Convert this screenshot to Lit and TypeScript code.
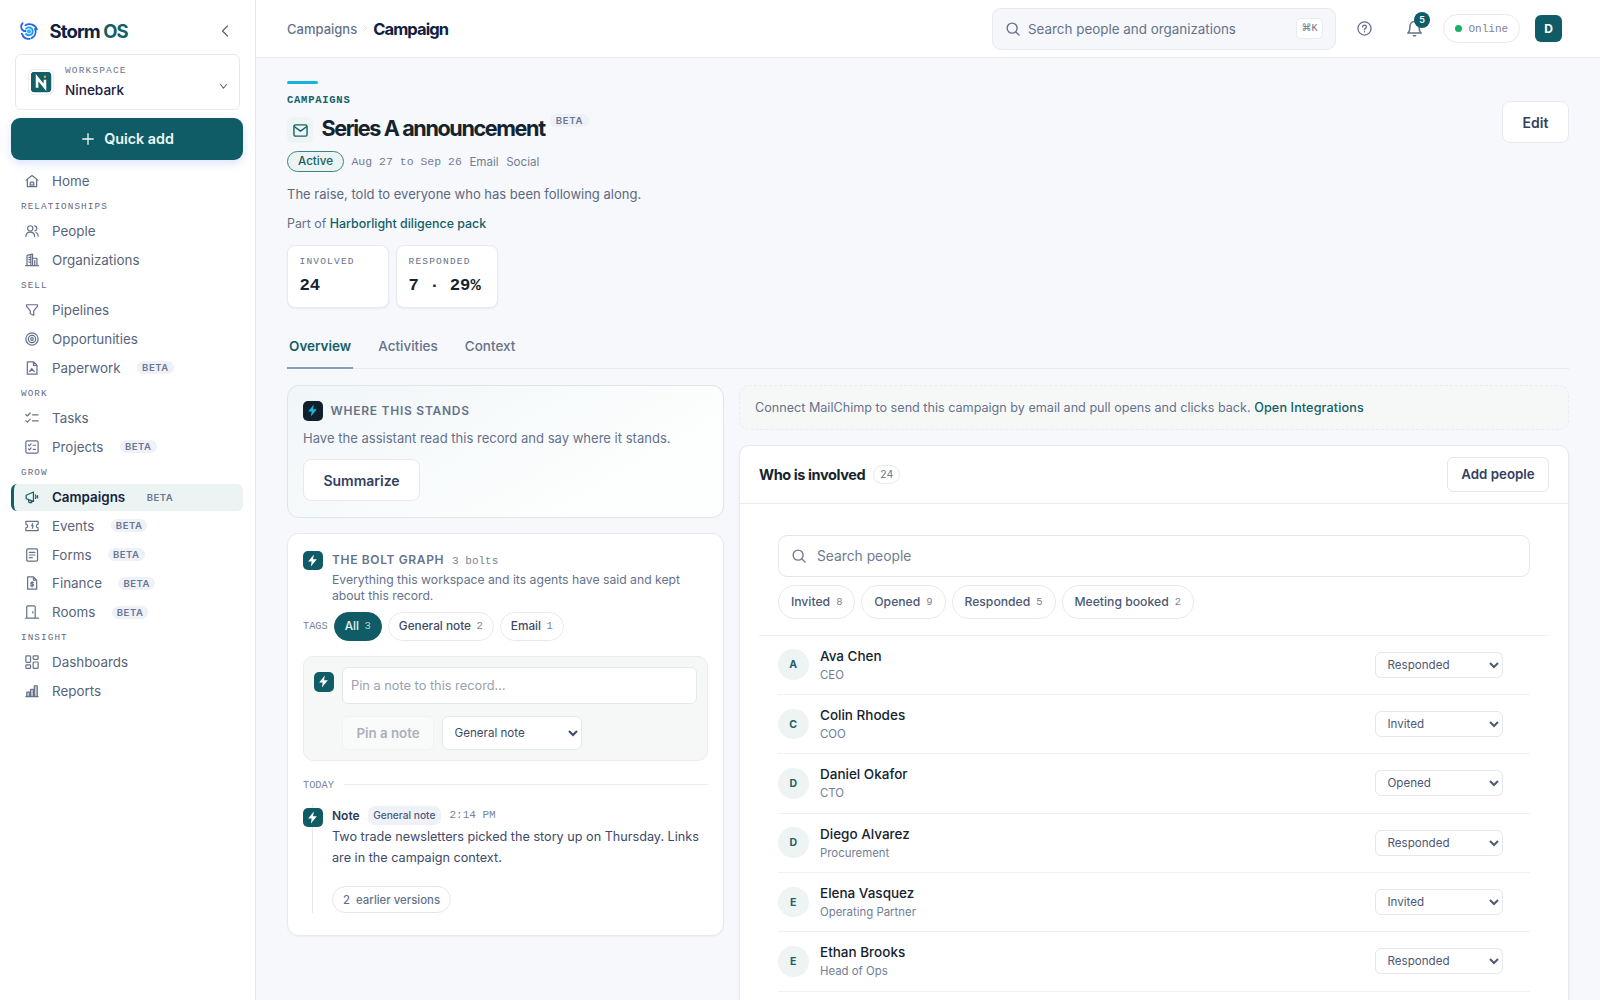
import { LitElement, html, css, svg, nothing } from 'lit';
import { customElement, property } from 'lit/decorators.js';
import { classMap } from 'lit/directives/class-map.js';

interface NavItem {
  label: string;
  icon: string;
  beta?: boolean;
  active?: boolean;
}

interface NavGroup {
  title?: string;
  items: NavItem[];
}

interface Person {
  name: string;
  role: string;
  status: string;
}

const NAV: NavGroup[] = [
  { items: [{ label: 'Home', icon: 'home' }] },
  {
    title: 'Relationships',
    items: [
      { label: 'People', icon: 'people' },
      { label: 'Organizations', icon: 'building' },
    ],
  },
  {
    title: 'Sell',
    items: [
      { label: 'Pipelines', icon: 'funnel' },
      { label: 'Opportunities', icon: 'target' },
      { label: 'Paperwork', icon: 'paper', beta: true },
    ],
  },
  {
    title: 'Work',
    items: [
      { label: 'Tasks', icon: 'tasks' },
      { label: 'Projects', icon: 'projects', beta: true },
    ],
  },
  {
    title: 'Grow',
    items: [
      { label: 'Campaigns', icon: 'megaphone', beta: true, active: true },
      { label: 'Events', icon: 'ticket', beta: true },
      { label: 'Forms', icon: 'form', beta: true },
      { label: 'Finance', icon: 'finance', beta: true },
      { label: 'Rooms', icon: 'door', beta: true },
    ],
  },
  {
    title: 'Insight',
    items: [
      { label: 'Dashboards', icon: 'dashboard' },
      { label: 'Reports', icon: 'chart' },
    ],
  },
];

const PEOPLE: Person[] = [
  { name: 'Ava Chen', role: 'CEO', status: 'Responded' },
  { name: 'Colin Rhodes', role: 'COO', status: 'Invited' },
  { name: 'Daniel Okafor', role: 'CTO', status: 'Opened' },
  { name: 'Diego Alvarez', role: 'Procurement', status: 'Responded' },
  { name: 'Elena Vasquez', role: 'Operating Partner', status: 'Invited' },
  { name: 'Ethan Brooks', role: 'Head of Ops', status: 'Responded' },
];

const STATUSES = ['Invited', 'Opened', 'Responded', 'Meeting booked'];

const FILTERS = [
  { label: 'Invited', count: 8 },
  { label: 'Opened', count: 9 },
  { label: 'Responded', count: 5 },
  { label: 'Meeting booked', count: 2 },
];

const TAGS = [
  { label: 'All', count: 3, active: true },
  { label: 'General note', count: 2, active: false },
  { label: 'Email', count: 1, active: false },
];

// 24x24 outlines, stroked with currentColor
const ICONS: Record<string, unknown> = {
  home: svg`<path d="M2 10.5 12 2.5l10 8M4 9.5v12h16v-12M9 21.5v-6q0-1.5 1.5-1.5h3q1.5 0 1.5 1.5v6M12 17.5v4"/>`,
  people: svg`<circle cx="9" cy="7.5" r="4.5"/><path d="M1.5 21.5c0-5 3-7.5 7.5-7.5s7.5 2.5 7.5 7.5M16.5 3.2c2.5.3 3.8 2 3.8 4.3s-1.3 3.7-3.3 4.2M19 14.5c2.5 1.2 3.7 3.5 3.7 6.5"/>`,
  building: svg`<path d="M1 21.5h22M3.5 21.5V4l9.5-2v19.5M13 9h7.5v12.5M6.8 7.5h2.5M6.8 11.5h2.5M6.8 15.5h2.5M10 2.5v19M16.8 13v8.5"/>`,
  funnel: svg`<path d="M2.5 3h19v2.5l-6.5 8V21l-6-2.5v-5l-6.5-8z"/>`,
  target: svg`<circle cx="12" cy="12" r="10.5"/><circle cx="12" cy="12" r="6.3"/><circle cx="12" cy="12" r="2.2"/>`,
  paper: svg`<path d="M4 1.5h11l5.5 5.5v15.5H4zM14.5 1.5v6h6M8 18c1.5-1 3-3.5 3.5-5.5.7 2 1.5 4.500 4.500 5.500M8.500 16h6"/>`,
  tasks: svg`<path d="M1.5 6 4 8.5l5-5M1.5 16.5 4 19l5-5M13 6.5h9.5M13 17h9.5"/>`,
  projects: svg`<rect x="1.5" y="1.5" width="21" height="21" rx="2.5"/><path d="M6 8.5 7.5 10l3-3.5M6 15.5 7.5 17l3-3.5M14 9h4M14 16h4"/>`,
  megaphone: svg`<path d="M2 9 14.5 3.5v16L2 15zM5.5 15.5l1.5 6h4.5l-1.5-4M18 8.5q1.5 3 0 6M21.5 9.5v4"/>`,
  ticket: svg`<path d="M1.5 4h21v5a3 3 0 0 0 0 6v5h-21v-5a3 3 0 0 0 0-6zM13 8l-1.5 3.5H14L12.5 16"/>`,
  form: svg`<rect x="3" y="1.5" width="18.5" height="21" rx="2"/><path d="M7.5 7.5H17M7.5 12H17M7.5 16.5h5"/>`,
  finance: svg`<path d="M4.5 1.5h10L20 7v15.5H4.5zM14.5 1.5V7h5M14.5 11.5c-1-1-4.5-1-4.5.8 0 2.2 4.5 1 4.5 3.2 0 1.9-3.5 1.9-4.7.7M12.2 9.5v9"/>`,
  door: svg`<path d="M1 22.5h22.5M3 22.5v-19q0-2 2-2h10.5q2 0 2 2v19M13.5 11.5v2"/>`,
  dashboard: svg`<rect x="1.5" y="1.5" width="8" height="11" rx="1.5"/><rect x="14" y="1.5" width="8.5" height="6" rx="1.5"/><rect x="1.5" y="17" width="8" height="6" rx="1.5"/><rect x="14" y="12" width="8.5" height="11" rx="1.5"/>`,
  chart: svg`<path fill="currentColor" fill-opacity=".35" d="M3 21v-7h5v7zM9.5 21V9h5v12zM16 21V3h5v18z"/><path d="M1.5 21.5h21"/>`,
  search: svg`<circle cx="10.5" cy="10.5" r="8.5"/><path d="M17 17l5.5 5.5"/>`,
  help: svg`<circle cx="12" cy="12" r="10.5"/><path d="M9 9.5c0-4 6-4 6 0 0 2.5-3 2-3 4.5M12 17v.5"/>`,
  bell: svg`<path d="M2.5 18.5c2.5-2 3-4 3-9C5.5 5 8 2 12 2s6.5 3 6.5 7.5c0 5 .5 7 3 9zM10.5 22q1.5 1 3 0"/>`,
  mail: svg`<rect x="1.5" y="3" width="21" height="18" rx="2.5"/><path d="M2.5 6l9.5 7 9.5-7"/>`,
  plus: svg`<path d="M12 1.5v21M1.5 12h21"/>`,
  left: svg`<path d="M17 2 7 12l10 10"/>`,
  down: svg`<path d="M2 5l10 13 10-13"/>`,
  right: svg`<path d="M7 3l9 9-9 9"/>`,
};

@customElement('storm-icon')
export class StormIcon extends LitElement {
  static styles = css`
    :host {
      display: inline-flex;
      flex: none;
    }

    svg {
      display: block;
      fill: none;
      stroke: currentColor;
      stroke-linecap: round;
      stroke-linejoin: round;
    }
  `;

  @property({ type: String })
  name = '';

  @property({ type: Number })
  size = 15;

  @property({ type: Number })
  weight = 2.1;

  render() {
    return html`
      <svg
        width=${this.size}
        height=${this.size}
        viewBox="0 0 24 24"
        stroke-width=${this.weight}
      >
        ${ICONS[this.name] ?? nothing}
      </svg>
    `;
  }
}

@customElement('storm-bolt')
export class StormBolt extends LitElement {
  static styles = css`
    :host {
      display: flex;
      flex: none;
      align-items: center;
      justify-content: center;
      width: 19.5px;
      height: 19.5px;
      border-radius: 5px;
      background: #105c66;
      color: #fff;
    }

    :host([dark]) {
      background: #10202c;
      color: #14b8e0;
    }
  `;

  @property({ type: Boolean, reflect: true })
  dark = false;

  render() {
    return html`
      <svg width="13" height="13" viewBox="0 0 24 24" fill="currentColor">
        <path d="M14.5 1 4 14h6.5L9 23 20 9.500h-7z"></path>
      </svg>
    `;
  }
}

@customElement('storm-sidebar')
export class StormSidebar extends LitElement {
  static styles = css`
    :host {
      display: block;
      box-sizing: border-box;
      width: 256px;
      height: 1000px;
      padding: 17px 12px 0 11px;
      border-right: 1px solid #e6eaf0;
      background: #fff;
      color: #58647c;
    }

    .brand {
      display: flex;
      align-items: center;
      height: 28px;
      padding: 0 12px 0 8.5px;
    }

    .wordmark {
      flex: 1;
      margin-left: 12px;
      font-size: 18.5px;
      font-weight: 700;
      letter-spacing: -0.88px;
      color: #10203f;
    }

    .wordmark span {
      color: #135f66;
    }

    .workspace {
      display: flex;
      align-items: center;
      box-sizing: border-box;
      height: 56px;
      margin: 9px 3px 8px 4px;
      padding: 0 12px;
      border: 1px solid #e6eaee;
      border-radius: 6px;
    }

    .workspace-logo {
      box-sizing: border-box;
      width: 26px;
      height: 26px;
      padding: 1.5px;
      border: 1px solid #e9eef3;
      border-radius: 6px;
    }

    .workspace-text {
      flex: 1;
      margin-left: 11px;
    }

    .eyebrow {
      font-family: 'Liberation Mono', monospace;
      font-size: 9.5px;
      line-height: 14px;
      letter-spacing: 1.15px;
      text-transform: uppercase;
      color: #6b7690;
    }

    .workspace-name {
      margin-top: 2px;
      font-size: 13.6px;
      line-height: 20px;
      font-weight: 500;
      color: #17223f;
    }

    .workspace storm-icon {
      margin: 9px 0.5px 0 0;
    }

    .quick-add {
      display: flex;
      align-items: center;
      justify-content: center;
      gap: 10px;
      width: 100%;
      height: 42px;
      margin-bottom: 7.5px;
      padding: 0 0 1px 2px;
      border: 0;
      border-radius: 9px;
      background: #105c66;
      box-shadow: 0 3px 10px rgba(60, 110, 240, 0.2);
      color: #eaf7f8;
      font: 600 14.3px Inter, sans-serif;
    }

    .item {
      display: flex;
      align-items: center;
      box-sizing: border-box;
      height: 27px;
      margin-bottom: 1.75px;
      padding-left: 14px;
      font-size: 13.4px;
    }

    .item storm-icon {
      width: 15px;
      margin-right: 12px;
      color: #66728a;
    }

    .item.active {
      padding-left: 11px;
      border-left: 3px solid #135f66;
      border-radius: 6px;
      background: #ebf3f3;
      font-weight: 600;
      color: #17223f;
    }

    .item.active storm-icon {
      color: #135f66;
    }

    .title {
      height: 21.5px;
      padding-left: 10px;
      font-family: 'Liberation Mono', monospace;
      font-size: 9.3px;
      line-height: 22px;
      letter-spacing: 1.1px;
      text-transform: uppercase;
      color: #5f6c84;
    }

    .beta {
      height: 13px;
      margin-left: 16.5px;
      padding: 0 5px;
      border-radius: 7px;
      background: #eef1f8;
      font-size: 9.6px;
      line-height: 13.5px;
      font-weight: 600;
      letter-spacing: 0.5px;
      color: #6b7690;
    }

    .active .beta {
      background: transparent;
    }
  `;

  render() {
    return html`
      <div class="brand">
        <svg
          width="18"
          height="18"
          viewBox="0 0 24 24"
          fill="none"
          stroke="#2563eb"
          stroke-width="2.4"
          stroke-linecap="round"
        >
          <path d="M3.5 1.5C.5 5 1 9.500 4.500 11.500c1 .6 2 .7 3 .5"></path>
          <path d="M7 4.500C13 .5 21 4 22.500 10"></path>
          <path d="M20 9c2 5 0 10-4.500 12.500"></path>
          <path d="M2.500 15.500C4 20 8 23 13 22.500"></path>
          <path
            stroke="#1d9bf0"
            d="M8 9c3-3.500 9-1.500 9 3.500 0 4.500-5.500 7-9 3.500"
          ></path>
          <circle cx="12" cy="12.500" r="1.500" stroke="#22b8f0"></circle>
        </svg>
        <div class="wordmark">Storm <span>OS</span></div>
        <storm-icon name="left" size="12" weight="2.4"></storm-icon>
      </div>

      <div class="workspace">
        <svg class="workspace-logo" viewBox="0 0 24 24">
          <rect width="24" height="24" rx="5" fill="#135f66"></rect>
          <path
            d="M7.5 18.5V7l9 11V9.5"
            fill="none"
            stroke="#fff"
            stroke-width="3"
          ></path>
          <circle cx="16.5" cy="6" r="1.4" fill="#e8a33d"></circle>
        </svg>
        <div class="workspace-text">
          <div class="eyebrow">Workspace</div>
          <div class="workspace-name">Ninebark</div>
        </div>
        <storm-icon name="down" size="7" weight="3.5"></storm-icon>
      </div>

      <button class="quick-add">
        <storm-icon name="plus" size="12" weight="2.6"></storm-icon>
        Quick add
      </button>

      <nav>
        ${NAV.map(
          (group) => html`
            ${group.title
              ? html`<div class="title">${group.title}</div>`
              : nothing}
            ${group.items.map((item) => this.#renderItem(item))}
          `,
        )}
      </nav>
    `;
  }

  #renderItem(item: NavItem) {
    return html`
      <div class=${classMap({ item: true, active: !!item.active })}>
        <storm-icon name=${item.icon} size="14"></storm-icon>
        <span>${item.label}</span>
        ${item.beta ? html`<span class="beta">BETA</span>` : nothing}
      </div>
    `;
  }
}

@customElement('storm-header')
export class StormHeader extends LitElement {
  static styles = css`
    :host {
      display: flex;
      align-items: center;
      box-sizing: border-box;
      height: 58px;
      padding: 0 38px 0 31px;
      border-bottom: 1px solid #e9edf2;
      background: #fff;
      color: #66728a;
    }

    .crumb {
      font-size: 13px;
      font-weight: 500;
    }

    .sep {
      margin: 0 4px 0 5px;
      color: #d5dae3;
    }

    .here {
      flex: 1;
      font-size: 16.5px;
      font-weight: 700;
      letter-spacing: -0.9px;
      color: #10203f;
    }

    .search {
      display: flex;
      align-items: center;
      box-sizing: border-box;
      width: 344.5px;
      height: 42px;
      padding: 0 12px 0 13px;
      border: 1px solid #e6eaf1;
      border-radius: 9px;
      background: #f5f7fb;
      font-size: 13.4px;
    }

    .search span {
      flex: 1;
      margin-left: 8.5px;
    }

    kbd {
      box-sizing: border-box;
      width: 27px;
      height: 21px;
      border: 1px solid #e6eaf1;
      border-radius: 5px;
      background: #fff;
      font: 10px/19px 'Liberation Mono', 'DejaVu Sans', monospace;
      text-align: center;
    }

    .help {
      margin-left: 21px;
    }

    .bell {
      display: flex;
      position: relative;
      margin-left: 33.5px;
    }

    .count {
      position: absolute;
      top: -8px;
      right: -7.5px;
      width: 16px;
      height: 16px;
      border-radius: 50%;
      background: #105c66;
      color: #fff;
      font-size: 9px;
      line-height: 16px;
      font-weight: 600;
      text-align: center;
    }

    .online {
      display: flex;
      align-items: center;
      gap: 7px;
      box-sizing: border-box;
      width: 77px;
      height: 29px;
      margin-left: 20.5px;
      padding-left: 10.5px;
      border: 1px solid #e6eaee;
      border-radius: 15px;
      font-family: 'Liberation Mono', monospace;
      font-size: 11px;
      color: #79849a;
    }

    .dot {
      width: 7px;
      height: 7px;
      border-radius: 50%;
      background: #17b26a;
    }

    .me {
      width: 27px;
      height: 27px;
      margin-left: 15px;
      border-radius: 6px;
      background: #105c66;
      color: #fff;
      font-size: 12px;
      line-height: 27px;
      font-weight: 700;
      text-align: center;
    }
  `;

  render() {
    return html`
      <span class="crumb">Campaigns</span>
      <storm-icon class="sep" name="right" size="7" weight="3"></storm-icon>
      <span class="here">Campaign</span>
      <div class="search">
        <storm-icon name="search" size="14" weight="2.4"></storm-icon>
        <span>Search people and organizations</span>
        <kbd>⌘K</kbd>
      </div>
      <storm-icon class="help" name="help" size="15"></storm-icon>
      <div class="bell">
        <storm-icon name="bell" size="17"></storm-icon>
        <span class="count">5</span>
      </div>
      <div class="online"><span class="dot"></span>Online</div>
      <div class="me">D</div>
    `;
  }
}

@customElement('storm-bolt-graph')
export class StormBoltGraph extends LitElement {
  static styles = css`
    :host {
      display: block;
      box-sizing: border-box;
      height: 403px;
      padding: 16px 15px 0;
      border: 1px solid #e6eaef;
      border-radius: 12px;
      background: #fff;
      box-shadow: 0 1px 2px rgba(16, 32, 63, 0.04);
      color: #66728a;
    }

    .mono {
      font-family: 'Liberation Mono', monospace;
    }

    .row {
      display: flex;
      gap: 9.5px;
    }

    .intro {
      height: 61.5px;
    }

    .intro storm-bolt {
      margin-top: 0.5px;
    }

    h3 {
      display: flex;
      align-items: baseline;
      margin: 0;
      font-size: 12px;
      line-height: 19px;
      font-weight: 600;
      letter-spacing: 0.64px;
    }

    h3 .mono {
      margin-left: 8px;
      font-size: 11px;
      font-weight: 400;
      letter-spacing: 0;
      color: #7a8599;
    }

    p {
      margin: 1px 0 0;
      font-size: 12.2px;
      line-height: 16.2px;
    }

    .tags {
      display: flex;
      align-items: center;
      gap: 6px;
    }

    .tags > .mono {
      font-size: 10.3px;
      color: #79849a;
    }

    .tag {
      display: flex;
      align-items: center;
      gap: 5.5px;
      box-sizing: border-box;
      height: 29px;
      padding: 0 10px;
      border: 1px solid #e6eaee;
      border-radius: 15px;
      font-size: 11.8px;
      font-weight: 500;
      color: #3d4a68;
    }

    .tag .mono {
      font-size: 10.5px;
      color: #79849a;
    }

    .tag.active {
      border-color: #105c66;
      background: #105c66;
      color: #e6f3f4;
    }

    .tag.active .mono {
      color: #b5d3d6;
    }

    .composer {
      display: flex;
      gap: 8.5px;
      box-sizing: border-box;
      height: 104.5px;
      margin-top: 15.5px;
      padding: 10px;
      border: 1px solid #e9eded;
      border-radius: 10px;
      background: #f6f8f8;
    }

    .composer storm-bolt {
      margin-top: 5px;
    }

    .fields {
      flex: 1;
    }

    .note-input {
      box-sizing: border-box;
      width: 100%;
      height: 37px;
      padding: 0 8px;
      border: 1px solid #e3e8ea;
      border-radius: 6px;
      background: #fff;
      font-size: 12.8px;
      line-height: 35px;
      color: #98a1b0;
    }

    .actions {
      display: flex;
      gap: 8px;
      margin-top: 12px;
    }

    .pin {
      box-sizing: border-box;
      width: 92px;
      height: 34px;
      border: 1px solid #f0f3f3;
      border-radius: 6px;
      background: #f9fafa;
      font-size: 13.3px;
      line-height: 32px;
      font-weight: 600;
      text-align: center;
      color: #aab1bc;
    }

    select {
      box-sizing: border-box;
      width: 140px;
      height: 34px;
      padding: 0 0 0 7.5px;
      border: 1px solid #e3e8ea;
      border-radius: 6px;
      background: #fff;
      color: #3d4a68;
      font: 11.6px Inter, sans-serif;
    }

    .day {
      display: flex;
      align-items: center;
      gap: 10px;
      height: 14px;
      margin: 17px 0 12.5px;
      font-size: 10.3px;
      color: #79849a;
    }

    .day::after {
      content: '';
      flex: 1;
      height: 1px;
      background: #e9edf0;
    }

    .marker {
      flex: none;
      height: 109px;
      padding-top: 3.5px;
      box-sizing: border-box;
      background: linear-gradient(#e6eaee, #e6eaee) 9px 0 / 1px 100% no-repeat;
    }

    .meta {
      display: flex;
      align-items: center;
      height: 22px;
    }

    .meta b {
      font-size: 12px;
      font-weight: 600;
      color: #2b3857;
    }

    .chip {
      height: 19px;
      margin: 0 8.5px 0 8px;
      padding: 0 5.5px;
      border-radius: 7px;
      background: #eef1f8;
      font-size: 10.2px;
      line-height: 19px;
      font-weight: 500;
      color: #4f5b76;
    }

    .meta .mono {
      font-size: 11px;
      color: #7a8599;
    }

    .body {
      margin: -0.5px 0 0;
      font-size: 12.65px;
      line-height: 21.5px;
      color: #3d4a68;
    }

    .versions {
      display: inline-flex;
      align-items: center;
      gap: 6px;
      box-sizing: border-box;
      height: 27px;
      margin-top: 17.5px;
      padding: 0 10px;
      border: 1px solid #e3e7ec;
      border-radius: 14px;
      font-size: 11.4px;
      font-weight: 500;
      color: #66728a;
    }
  `;

  render() {
    return html`
      <div class="row intro">
        <storm-bolt></storm-bolt>
        <div>
          <h3>THE BOLT GRAPH <span class="mono">3 bolts</span></h3>
          <p>
            Everything this workspace and its agents have said and kept about
            this record.
          </p>
        </div>
      </div>
      <div class="tags">
        <span class="mono">TAGS</span>
        ${TAGS.map(
          (tag) => html`
            <span class=${classMap({ tag: true, active: tag.active })}>
              ${tag.label} <span class="mono">${tag.count}</span>
            </span>
          `,
        )}
      </div>
      <div class="composer">
        <storm-bolt></storm-bolt>
        <div class="fields">
          <div class="note-input">Pin a note to this record…</div>
          <div class="actions">
            <div class="pin">Pin a note</div>
            <select>
              <option>General note</option>
              <option>Email</option>
            </select>
          </div>
        </div>
      </div>
      <div class="day mono">TODAY</div>
      <div class="row">
        <div class="marker"><storm-bolt></storm-bolt></div>
        <div>
          <div class="meta">
            <b>Note</b><span class="chip">General note</span>
            <span class="mono">2:14 PM</span>
          </div>
          <p class="body">
            Two trade newsletters picked the story up on Thursday. Links are in
            the campaign context.
          </p>
          <div class="versions"><span>2</span> earlier versions</div>
        </div>
      </div>
    `;
  }
}

@customElement('storm-people')
export class StormPeople extends LitElement {
  static styles = css`
    :host {
      display: block;
      box-sizing: border-box;
      height: 600px;
      border: 1px solid #e6eaef;
      border-radius: 10px;
      background: #fff;
      box-shadow: 0 1px 3px rgba(16, 32, 63, 0.06);
      color: #66728a;
    }

    header {
      display: flex;
      align-items: center;
      box-sizing: border-box;
      height: 58px;
      padding: 0 19px;
      border-bottom: 1px solid #e9edf0;
    }

    h2 {
      margin: 0;
      font-size: 14.5px;
      font-weight: 700;
      letter-spacing: -0.4px;
      color: #15232e;
    }

    .total {
      box-sizing: border-box;
      height: 19px;
      margin-left: 8px;
      padding: 0 6px;
      border: 1px solid #e6eaee;
      border-radius: 10px;
      font-size: 10.5px;
      line-height: 17px;
    }

    .add {
      box-sizing: border-box;
      width: 102px;
      height: 35px;
      margin-left: auto;
      border: 1px solid #e3e7ec;
      border-radius: 6px;
      font-size: 13.3px;
      line-height: 33px;
      font-weight: 600;
      text-align: center;
      color: #34405f;
    }

    .tools {
      margin: 0 19px;
      padding: 31px 19px 15.5px;
      border-bottom: 1px solid #eef1f3;
    }

    .search {
      display: flex;
      align-items: center;
      gap: 11px;
      box-sizing: border-box;
      height: 42px;
      padding-left: 13px;
      border: 1px solid #e3e7ea;
      border-radius: 9px;
      font-size: 13.8px;
      color: #707b90;
    }

    .filters {
      display: flex;
      gap: 6px;
      margin-top: 7.5px;
    }

    .filter {
      display: flex;
      align-items: center;
      gap: 6px;
      box-sizing: border-box;
      height: 34.5px;
      padding: 0 11.9px;
      border: 1px solid #e6eaee;
      border-radius: 18px;
      font-size: 12.2px;
      font-weight: 500;
      color: #4d5975;
    }

    .filter span {
      font-family: 'Liberation Mono', monospace;
      font-size: 10.5px;
      font-weight: 400;
      color: #79849a;
    }

    .rows {
      margin: 0 38px;
    }

    .person {
      display: flex;
      align-items: center;
      box-sizing: border-box;
      height: 59.35px;
      padding-right: 27.5px;
      border-bottom: 1px solid #eef1f3;
    }

    .avatar {
      width: 30.5px;
      height: 30.5px;
      margin-right: 11.5px;
      border-radius: 50%;
      background: #edf4f3;
      font-size: 10.5px;
      line-height: 32px;
      font-weight: 700;
      text-align: center;
      color: #1c6068;
    }

    .name {
      font-size: 13.5px;
      line-height: 20px;
      font-weight: 500;
      color: #15232e;
    }

    .role {
      font-size: 11.4px;
      line-height: 18px;
      color: #727e96;
    }

    select {
      box-sizing: border-box;
      width: 128px;
      height: 26px;
      margin-left: auto;
      padding: 0 0 0 8px;
      border: 1px solid #e3e8ec;
      border-radius: 6px;
      background: #fff;
      color: #4d5975;
      font: 11.6px Inter, sans-serif;
    }
  `;

  render() {
    return html`
      <header>
        <h2>Who is involved</h2>
        <span class="total">24</span>
        <div class="add">Add people</div>
      </header>
      <div class="tools">
        <div class="search">
          <storm-icon name="search" size="14" weight="2.4"></storm-icon>
          Search people
        </div>
        <div class="filters">
          ${FILTERS.map(
            (f) => html`<div class="filter">${f.label} <span>${f.count}</span></div>`,
          )}
        </div>
      </div>
      <div class="rows">
        ${PEOPLE.map(
          (person) => html`
            <div class="person">
              <div class="avatar">${person.name[0]}</div>
              <div>
                <div class="name">${person.name}</div>
                <div class="role">${person.role}</div>
              </div>
              <select>
                ${STATUSES.map(
                  (s) =>
                    html`<option ?selected=${s === person.status}>${s}</option>`,
                )}
              </select>
            </div>
          `,
        )}
      </div>
    `;
  }
}

@customElement('app-root')
export class AppRoot extends LitElement {
  static styles = css`
    :host {
      display: flex;
      height: 1000px;
      overflow: hidden;
      background: #f6f8fc;
      color: #66728a;
      font-family: Inter, sans-serif;
    }

    .page {
      flex: 1;
      min-width: 0;
    }

    main {
      padding: 23px 31px 0;
    }

    .mono {
      font-family: 'Liberation Mono', monospace;
    }

    .top {
      display: flex;
      justify-content: space-between;
      height: 232px;
    }

    .accent {
      width: 31px;
      height: 3px;
      border-radius: 2px;
      background: #17b3dc;
    }

    .eyebrow {
      margin-top: 8px;
      font-size: 10.5px;
      line-height: 16px;
      font-weight: 700;
      letter-spacing: 0.75px;
      color: #135f66;
    }

    .heading {
      display: flex;
      align-items: center;
      height: 28px;
      margin-top: 8px;
    }

    .glyph {
      display: flex;
      align-items: center;
      justify-content: center;
      width: 26px;
      height: 26px;
      margin-right: 8.5px;
      border-radius: 6px;
      background: #edf4f4;
      color: #135f66;
    }

    h1 {
      margin: -4px 0 0;
      font-size: 21.6px;
      font-weight: 700;
      letter-spacing: -1.38px;
      color: #15232e;
    }

    .beta {
      align-self: flex-start;
      height: 13px;
      margin: -2px 0 0 5px;
      padding: 0 6px;
      border-radius: 6px;
      background: #eef1f8;
      font-size: 9.6px;
      line-height: 13.5px;
      font-weight: 600;
      letter-spacing: 0.7px;
      color: #6b7690;
    }

    .facts {
      display: flex;
      align-items: center;
      gap: 7.5px;
      margin-top: 7px;
      font-size: 11.6px;
      color: #727e96;
    }

    .facts .mono {
      font-size: 11.5px;
    }

    .status {
      box-sizing: border-box;
      height: 21px;
      padding: 0 10px;
      border: 1px solid #3d8288;
      border-radius: 11px;
      background: #ebf4f3;
      font-weight: 500;
      line-height: 19px;
      color: #135f66;
    }

    .lede {
      margin: 13px 0 0;
      font-size: 13px;
      line-height: 19px;
      color: #5c6880;
    }

    .parent {
      margin: 11px 0 0;
      font-size: 12.4px;
      line-height: 18px;
    }

    .link {
      font-weight: 500;
      color: #135f66;
    }

    .button {
      box-sizing: border-box;
      height: 42px;
      border: 1px solid #e6eaf0;
      border-radius: 8px;
      background: #fff;
      font-size: 14px;
      line-height: 41px;
      font-weight: 600;
      text-align: center;
      color: #34405f;
    }

    .edit {
      width: 67px;
      margin-top: 20px;
    }

    .stats {
      display: flex;
      gap: 7.5px;
      margin-top: 12px;
    }

    .stat {
      box-sizing: border-box;
      width: 101.5px;
      height: 63px;
      padding: 8px 11.5px;
      border: 1px solid #e6eaef;
      border-radius: 8px;
      background: #fff;
      box-shadow: 0 1px 2px rgba(16, 32, 63, 0.06);
      font-family: 'Liberation Mono', monospace;
    }

    .stat-label {
      font-size: 9.5px;
      line-height: 16px;
      letter-spacing: 1.2px;
    }

    .stat-value {
      margin-top: 3.5px;
      font-size: 17.2px;
      line-height: 24px;
      font-weight: 700;
      color: #15232e;
      white-space: pre;
    }

    .tabs {
      display: flex;
      gap: 23px;
      height: 31px;
      margin-top: 24px;
      border-bottom: 1px solid #e6eaef;
      font-size: 13.5px;
      line-height: 18px;
      font-weight: 500;
    }

    .tab {
      height: 30px;
      padding: 0 2px;
    }

    .tab.active {
      border-bottom: 2px solid #7fa5af;
      font-weight: 600;
      color: #135f66;
    }

    .columns {
      display: grid;
      grid-template-columns: 436.5px 830px;
      gap: 15.5px;
      margin-top: 16px;
    }

    .column {
      display: flex;
      flex-direction: column;
      gap: 15px;
    }

    .stands {
      box-sizing: border-box;
      height: 133px;
      padding: 15px;
      border: 1px solid #dce7ea;
      border-radius: 12px;
      background: linear-gradient(150deg, #f1f6f8, #fdfefe 75%);
    }

    .stands-head {
      display: flex;
      align-items: center;
      gap: 8px;
      font-size: 12px;
      font-weight: 600;
      letter-spacing: 0.75px;
    }

    .stands p {
      margin: 7px 0 11px;
      font-size: 13.05px;
      line-height: 20px;
    }

    .summarize {
      width: 117px;
    }

    .banner {
      box-sizing: border-box;
      height: 45px;
      padding: 0 15px;
      border: 1px dashed #e8eded;
      border-radius: 10px;
      background: #f6f8f8;
      font-size: 12.62px;
      line-height: 43px;
    }

    .banner .link {
      letter-spacing: 0.12px;
    }
  `;

  render() {
    return html`
      <storm-sidebar></storm-sidebar>
      <div class="page">
        <storm-header></storm-header>
        <main>
          <section class="top">
            <div>
              <div class="accent"></div>
              <div class="eyebrow mono">CAMPAIGNS</div>
              <div class="heading">
                <span class="glyph">
                  <storm-icon name="mail" size="15" weight="2.2"></storm-icon>
                </span>
                <h1>Series A announcement</h1>
                <span class="beta">BETA</span>
              </div>
              <div class="facts">
                <span class="status">Active</span>
                <span class="mono">Aug 27 to Sep 26</span>
                <span>Email</span>
                <span>Social</span>
              </div>
              <p class="lede">
                The raise, told to everyone who has been following along.
              </p>
              <p class="parent">
                Part of <span class="link">Harborlight diligence pack</span>
              </p>
              <div class="stats">
                <div class="stat">
                  <div class="stat-label">INVOLVED</div>
                  <div class="stat-value">24</div>
                </div>
                <div class="stat">
                  <div class="stat-label">RESPONDED</div>
                  <div class="stat-value">7 · 29%</div>
                </div>
              </div>
            </div>
            <div class="button edit">Edit</div>
          </section>

          <div class="tabs">
            <span class="tab active">Overview</span>
            <span class="tab">Activities</span>
            <span class="tab">Context</span>
          </div>

          <div class="columns">
            <div class="column">
              <section class="stands">
                <div class="stands-head">
                  <storm-bolt dark></storm-bolt>WHERE THIS STANDS
                </div>
                <p>Have the assistant read this record and say where it stands.</p>
                <div class="button summarize">Summarize</div>
              </section>
              <storm-bolt-graph></storm-bolt-graph>
            </div>
            <div class="column">
              <div class="banner">
                Connect MailChimp to send this campaign by email and pull opens
                and clicks back. <span class="link">Open Integrations</span>
              </div>
              <storm-people></storm-people>
            </div>
          </div>
        </main>
      </div>
    `;
  }
}

declare global {
  interface HTMLElementTagNameMap {
    'app-root': AppRoot;
    'storm-sidebar': StormSidebar;
    'storm-header': StormHeader;
    'storm-bolt-graph': StormBoltGraph;
    'storm-people': StormPeople;
    'storm-icon': StormIcon;
    'storm-bolt': StormBolt;
  }
}
